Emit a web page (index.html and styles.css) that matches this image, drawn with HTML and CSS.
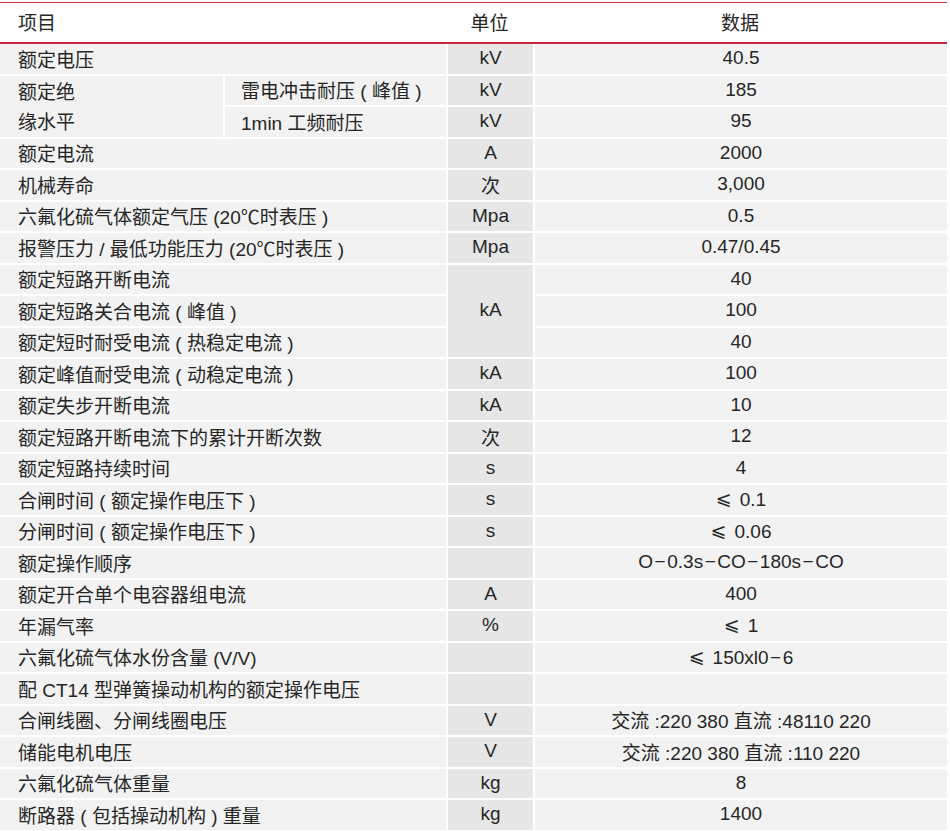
FILE: index.html
```html
<!DOCTYPE html>
<html lang="zh-CN">
<head>
<meta charset="utf-8">
<link rel="stylesheet" href="styles.css">
</head>
<body>
<div class="sheet">
  <div class="head">
    <div class="h-item">项目</div>
    <div class="h-unit">单位</div>
    <div class="h-data">数据</div>
  </div>
  <div class="grid">
    <div class="c name full">额定电压</div><div class="c unit">kV</div><div class="c data">40.5</div>

    <div class="c name sub-a span2"><span>额定绝</span><span>缘水平</span></div>
    <div class="c name sub-b">雷电冲击耐压 ( 峰值 )</div><div class="c unit">kV</div><div class="c data">185</div>
    <div class="c name sub-b">1min 工频耐压</div><div class="c unit">kV</div><div class="c data">95</div>

    <div class="c name full">额定电流</div><div class="c unit">A</div><div class="c data">2000</div>
    <div class="c name full">机械寿命</div><div class="c unit">次</div><div class="c data">3,000</div>
    <div class="c name full">六氟化硫气体额定气压 (20℃时表压 )</div><div class="c unit">Mpa</div><div class="c data">0.5</div>
    <div class="c name full">报警压力 / 最低功能压力 (20℃时表压 )</div><div class="c unit">Mpa</div><div class="c data">0.47/0.45</div>

    <div class="c name full">额定短路开断电流</div><div class="c unit span3">kA</div><div class="c data">40</div>
    <div class="c name full">额定短路关合电流 ( 峰值 )</div><div class="c data">100</div>
    <div class="c name full">额定短时耐受电流 ( 热稳定电流 )</div><div class="c data">40</div>

    <div class="c name full">额定峰值耐受电流 ( 动稳定电流 )</div><div class="c unit">kA</div><div class="c data">100</div>
    <div class="c name full">额定失步开断电流</div><div class="c unit">kA</div><div class="c data">10</div>
    <div class="c name full">额定短路开断电流下的累计开断次数</div><div class="c unit">次</div><div class="c data">12</div>
    <div class="c name full">额定短路持续时间</div><div class="c unit">s</div><div class="c data">4</div>
    <div class="c name full">合闸时间 ( 额定操作电压下 )</div><div class="c unit">s</div><div class="c data"><span><span class="le">⩽</span>0.1</span></div>
    <div class="c name full">分闸时间 ( 额定操作电压下 )</div><div class="c unit">s</div><div class="c data"><span><span class="le">⩽</span>0.06</span></div>
    <div class="c name full">额定操作顺序</div><div class="c unit"></div><div class="c data"><span>O<span class="mn">−</span>0.3s<span class="mn">−</span>CO<span class="mn">−</span>180s<span class="mn">−</span>CO</span></div>
    <div class="c name full">额定开合单个电容器组电流</div><div class="c unit">A</div><div class="c data">400</div>
    <div class="c name full">年漏气率</div><div class="c unit">%</div><div class="c data"><span><span class="le">⩽</span>1</span></div>
    <div class="c name full">六氟化硫气体水份含量 (V/V)</div><div class="c unit"></div><div class="c data"><span><span class="le">⩽</span>150xl0<span class="mn">−</span>6</span></div>
    <div class="c name full">配 CT14 型弹簧操动机构的额定操作电压</div><div class="c unit"></div><div class="c data"></div>
    <div class="c name full">合闸线圈、分闸线圈电压</div><div class="c unit">V</div><div class="c data">交流 :220 380 直流 :48110 220</div>
    <div class="c name full">储能电机电压</div><div class="c unit">V</div><div class="c data">交流 :220 380 直流 :110 220</div>
    <div class="c name full">六氟化硫气体重量</div><div class="c unit">kg</div><div class="c data">8</div>
    <div class="c name full">断路器 ( 包括操动机构 ) 重量</div><div class="c unit">kg</div><div class="c data">1400</div>
  </div>
</div>
</body>
</html>
```
FILE: styles.css
```css
html, body {
  margin: 0;
  padding: 0;
  background: #ffffff;
}
body {
  font-family: "Liberation Sans", "Noto Sans CJK SC", sans-serif;
  font-size: 19px;
  color: #262626;
}
.sheet {
  width: 947px;
  padding-top: 2px;
}
.head {
  display: grid;
  grid-template-columns: 446px 87px 414px;
  height: 42px;
  box-sizing: border-box;
  padding-bottom: 3px;
  border-top: 1px solid #c8303c;
  border-bottom: 2px solid #c8283a;
  align-items: center;
}
.h-item {
  padding-left: 18px;
}
.h-unit, .h-data {
  text-align: center;
}
.grid {
  display: grid;
  grid-template-columns: 223px 221px 85px 412px;
  grid-auto-rows: 29.5px;
  gap: 2px;
}
.c {
  display: flex;
  align-items: center;
  background: #f2f2f2;
  white-space: nowrap;
  box-sizing: border-box;
  padding-bottom: 1px;
}
.name {
  padding-left: 18px;
}
.full {
  grid-column: 1 / 3;
}
.sub-a {
  grid-column: 1 / 2;
  flex-direction: column;
  align-items: flex-start;
  justify-content: space-around;
}
.sub-b {
  grid-column: 2 / 3;
  padding-left: 16px;
}
.span2 {
  grid-row: span 2;
}
.span3 {
  grid-row: span 3;
}
.unit {
  grid-column: 3 / 4;
  background: #e6e6e6;
  justify-content: center;
}
.data {
  grid-column: 4 / 5;
  justify-content: center;
}
.le {
  font-family: "DejaVu Sans", sans-serif;
  font-size: 19px;
  margin-right: 8px;
  vertical-align: 1px;
}
.mn {
  margin: 0 1.5px;
}
```
